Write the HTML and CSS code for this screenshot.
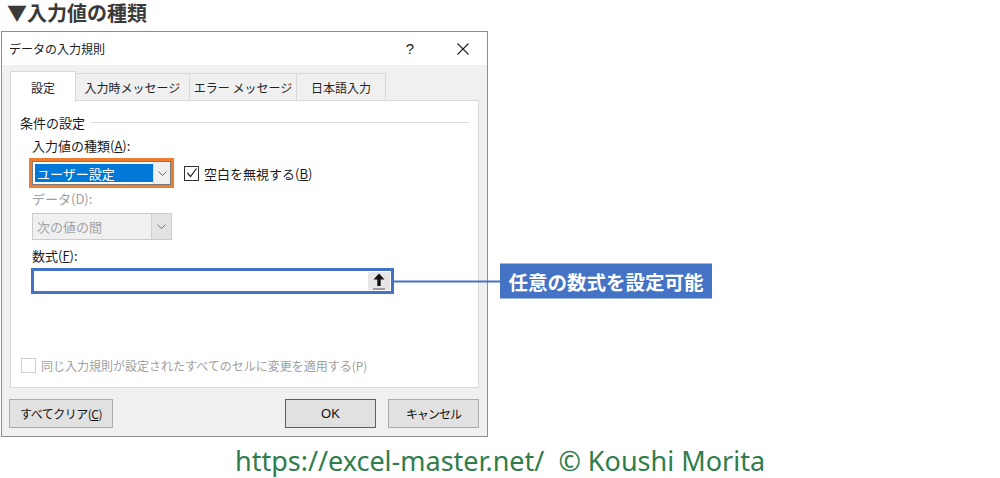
FILE: index.html
```html
<!DOCTYPE html>
<html lang="ja">

<head>
    <meta charset="UTF-8">
    <meta name="viewport" content="width=device-width, initial-scale=1.0">
    <title>入力値の種類</title>
    <link rel="stylesheet" href="styles.css">
</head>

<body>
    <h1 class="page-title">▼入力値の種類</h1>

    <div class="dialog">
        <div class="titlebar">
            <span class="titlebar-text">データの入力規則</span>
            <span class="titlebar-help">?</span>
            <span class="titlebar-close">
                <svg width="12" height="12" viewBox="0 0 12 12">
                    <path d="M0.5 0.5 L11.5 11.5 M11.5 0.5 L0.5 11.5" stroke="#222" stroke-width="1.1" fill="none" />
                </svg>
            </span>
        </div>

        <div class="dialog-body">
            <div class="tabs">
                <div class="tab active">設定</div>
                <div class="tab tab-wide">入力時メッセージ</div>
                <div class="tab tab-error">エラー メッセージ</div>
                <div class="tab tab-ime">日本語入力</div>
            </div>

            <div class="panel">
                <div class="group-title"><span>条件の設定</span></div>

                <div class="group">
                    <div class="label">入力値の種類(<u>A</u>):</div>
                    <div class="row">
                        <div class="combo marked">
                            <span class="combo-value"><span class="selected">ユーザー設定</span></span>
                            <span class="combo-btn">
                                <svg width="9" height="5" viewBox="0 0 9 5">
                                    <polyline points="0.5,0.5 4.5,4.5 8.5,0.5" stroke="#666" fill="none" />
                                </svg>
                            </span>
                        </div>
                        <div class="check">
                            <span class="box">
                                <svg width="12" height="12" viewBox="0 0 12 12">
                                    <polyline points="1.5,6 4.5,9.5 10.5,1.5" stroke="#222" stroke-width="1.2" fill="none" />
                                </svg>
                            </span>
                            <span>空白を無視する(<u>B</u>)</span>
                        </div>
                    </div>

                    <div class="label disabled">データ(D):</div>
                    <div class="combo combo-disabled">
                        <span class="combo-value">次の値の間</span>
                        <span class="combo-btn">
                            <svg width="9" height="5" viewBox="0 0 9 5">
                                <polyline points="0.5,0.5 4.5,4.5 8.5,0.5" stroke="#777" fill="none" />
                            </svg>
                        </span>
                    </div>

                    <div class="label label-formula">数式(<u>F</u>):</div>
                    <div class="formula">
                        <div class="formula-input"></div>
                        <div class="formula-btn">
                            <svg width="12" height="17" viewBox="0 0 12 17">
                                <path d="M6 0.5 L11.5 6.5 L7.7 6.5 L7.7 13 L4.3 13 L4.3 6.5 L0.5 6.5 Z" fill="#111" />
                                <rect x="0" y="15.5" width="12" height="1" fill="#555" />
                            </svg>
                        </div>
                        <!-- annotation pointing at the formula box -->
                        <div class="callout">
                            <span class="callout-line"></span>
                            <span class="callout-box">任意の数式を設定可能</span>
                        </div>
                    </div>
                </div>

                <div class="apply-all">
                    <span class="box box-disabled"></span>
                    <span>同じ入力規則が設定されたすべてのセルに変更を適用する(P)</span>
                </div>
            </div>

            <div class="buttons">
                <button class="btn btn-clear">すべてクリア(<u>C</u>)</button>
                <div class="buttons-right">
                    <button class="btn btn-ok">OK</button>
                    <button class="btn btn-cancel">キャンセル</button>
                </div>
            </div>
        </div>
    </div>

    <div class="credit">https://excel-master.net/  © Koushi Morita</div>
</body>

</html>
```

FILE: styles.css
```css
body {
    margin: 0;
    padding: 0;
    background-color: #fff;
    font-family: "Noto Sans CJK JP", sans-serif;
    color: #1a1a1a;
}

.page-title {
    margin: 0;
    padding-left: 7px;
    height: 31px;
    line-height: 26px;
    font-size: 20px;
    font-weight: 700;
    color: #3a3a3a;
}

.dialog {
    width: 485px;
    margin-left: 1px;
    border: 1px solid #8f8f8f;
    background-color: #f0f0f0;
    font-size: 13px;
}

.titlebar {
    display: flex;
    align-items: center;
    height: 33px;
    background-color: #fff;
    padding-left: 7px;
}

.titlebar-text {
    font-size: 12px;
    flex: 1;
}

.titlebar-help {
    width: 14px;
    text-align: center;
    font-family: "Liberation Sans", sans-serif;
    font-size: 15px;
    margin-right: 40px;
}

.titlebar-close {
    display: flex;
    margin-right: 18px;
}

.dialog-body {
    padding: 8px;
}

.tabs {
    display: flex;
    height: 27px;
    font-size: 12px;
}

.tab {
    display: flex;
    align-items: center;
    justify-content: center;
    width: 113px;
    border: 1px solid #d9d9d9;
    border-bottom: none;
    border-left: none;
    background-color: #f0f0f0;
    color: #222;
}

.tab.active {
    width: 64px;
    margin-top: -2px;
    height: 30px;
    background-color: #fff;
    border-left: 1px solid #d9d9d9;
    position: relative;
    z-index: 1;
}

.tab-error {
    width: 106px;
}

.tab-ime {
    width: 88px;
}

.panel {
    display: flex;
    flex-direction: column;
    box-sizing: border-box;
    height: 288px;
    background-color: #fff;
    border: 1px solid #d9d9d9;
    padding: 12px 9px 13px 9px;
}

.group-title {
    display: flex;
    align-items: center;
    height: 18px;
    font-size: 13px;
}

.group-title::after {
    content: "";
    flex: 1;
    height: 1px;
    margin-left: 6px;
    background-color: #dcdcdc;
}

.group {
    padding-left: 12px;
}

.label {
    height: 18px;
    line-height: 18px;
    margin-top: 6px;
}

.label.disabled {
    color: #a0a0a0;
    margin-top: 5px;
}

.label-formula {
    margin-top: 7px;
}

.row {
    display: flex;
    align-items: center;
    margin-top: 6px;
}

.combo {
    display: flex;
    width: 139px;
    height: 24px;
    border: 1px solid #7a7a7a;
    background-color: #fff;
    box-sizing: border-box;
}

.combo.marked {
    outline: 3px solid #ed7d31;
}

.combo-value {
    flex: 1;
    display: flex;
    align-items: center;
    padding-left: 2px;
}

.selected {
    display: flex;
    align-items: center;
    width: 116px;
    height: 18px;
    padding-left: 2px;
    background-color: #0078d7;
    color: #fff;
}

.combo-btn {
    display: flex;
    align-items: center;
    justify-content: center;
    width: 18px;
    background-color: #f0f0f0;
    border-left: 1px solid #e0e0e0;
}

.combo-disabled {
    width: 140px;
    height: 27px;
    margin-top: 5px;
    border-color: #cccccc;
    background-color: #f0f0f0;
    color: #a3a3a3;
}

.combo-disabled .combo-value {
    padding-left: 4px;
}

.combo-disabled .combo-btn {
    width: 19px;
    background-color: #e3e3e3;
    border-left: 1px solid #d0d0d0;
}

.check {
    display: flex;
    align-items: center;
    margin-left: 13px;
}

.box {
    display: flex;
    align-items: center;
    justify-content: center;
    width: 13px;
    height: 13px;
    border: 1px solid #333;
    margin-right: 5px;
    background-color: #fff;
}

.formula {
    position: relative;
    display: flex;
    width: 357px;
    height: 20px;
    margin-top: 3px;
    margin-left: -1px;
    border: 3px solid #4472c4;
    background-color: #fff;
}

.formula-input {
    flex: 1;
}

.formula-btn {
    display: flex;
    align-items: center;
    justify-content: center;
    width: 22px;
    margin: 1px;
    background-color: #e6e6e6;
}

.callout {
    position: absolute;
    left: 100%;
    top: 50%;
    margin-left: 3px;
    transform: translateY(-50%);
    display: flex;
    align-items: center;
}

.callout-line {
    width: 106px;
    height: 2px;
    background-color: #4472c4;
}

.callout-box {
    display: flex;
    align-items: center;
    justify-content: center;
    width: 212px;
    height: 35px;
    background-color: #4472c4;
    color: #fff;
    font-size: 19.5px;
    font-weight: 700;
    white-space: nowrap;
}

.apply-all {
    display: flex;
    align-items: center;
    margin-top: auto;
    height: 18px;
    color: #a0a0a0;
    font-size: 12px;
}

.box-disabled {
    border-color: #cfcfcf;
    margin-left: 1px;
}

.buttons {
    display: flex;
    justify-content: space-between;
    margin-top: 11px;
}

.buttons-right {
    display: flex;
    gap: 12px;
}

.btn {
    height: 29px;
    width: 91px;
    border: 1px solid #adadad;
    background-color: #e1e1e1;
    font-family: "Noto Sans CJK JP", sans-serif;
    font-size: 12px;
    color: #111;
    padding: 0;
}

.btn-clear {
    width: 104px;
    margin-left: -1px;
    letter-spacing: -0.5px;
}

.btn-cancel {
    letter-spacing: -1px;
}

.btn-ok {
    border-color: #0078d7;
    font-family: "Liberation Sans", sans-serif;
    font-size: 13px;
}

.credit {
    text-align: center;
    white-space: pre;
    font-family: "Noto Sans", sans-serif;
    font-size: 27px;
    color: #2f7d4c;
    margin-top: 8px;
    line-height: 32px;
}
```
